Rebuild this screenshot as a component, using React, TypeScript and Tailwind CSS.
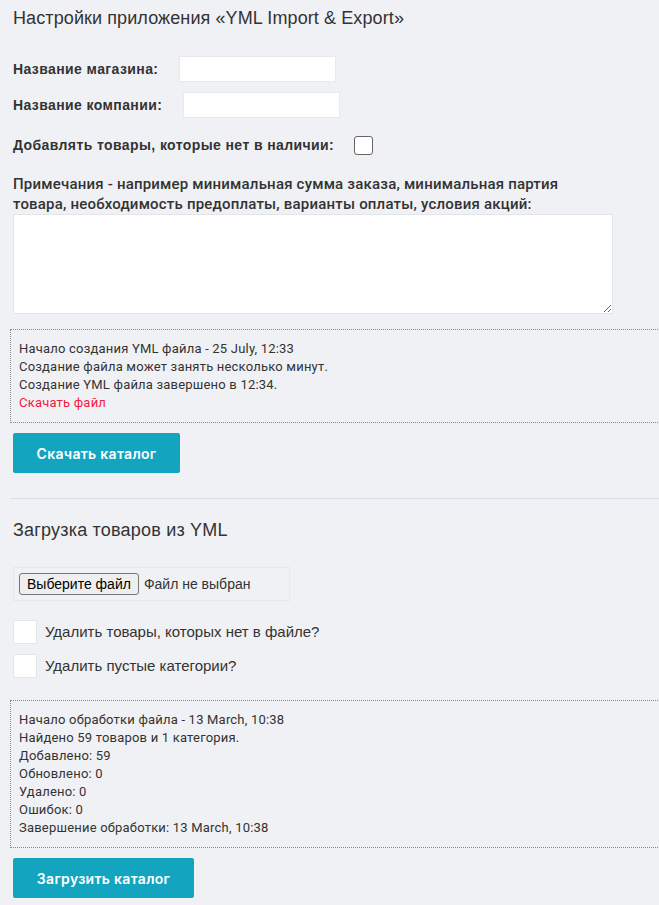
import { useState } from "react";

const logLines = [
  "Начало обработки файла - 13 March, 10:38",
  "Найдено 59 товаров и 1 категория.",
  "Добавлено: 59",
  "Обновлено: 0",
  "Удалено: 0",
  "Ошибок: 0",
  "Завершение обработки: 13 March, 10:38",
];

function LogBox({ children }: { children: React.ReactNode }) {
  return (
    <div className="-ml-[3px] w-[700px] border border-dotted border-[#8a8a8a] px-[8px] py-[10px] text-[13px] leading-[18px] tracking-[0.2px] text-[#333] font-['Roboto',sans-serif]">
      {children}
    </div>
  );
}

function Checkbox({ checked, onChange, className }: { checked: boolean; onChange: () => void; className: string }) {
  return (
    <button
      type="button"
      onClick={onChange}
      className={className + " bg-white grid place-items-center shrink-0"}
    >
      {checked && (
        <svg viewBox="0 0 16 16" className="w-3 h-3 text-[#333]">
          <path d="M3 8l3 3 7-7" fill="none" stroke="currentColor" strokeWidth="2" />
        </svg>
      )}
    </button>
  );
}

export default function App() {
  const [outOfStock, setOutOfStock] = useState(false);
  const [delMissing, setDelMissing] = useState(false);
  const [delEmpty, setDelEmpty] = useState(false);

  return (
    <div className="min-h-[905px] bg-[#f0f1f4] overflow-hidden pl-[13px] text-[#333] font-['Liberation_Sans',Arial,sans-serif]">
      <h1 className="pt-[6px] text-[18px] leading-[24px] tracking-[0.1px]">Настройки приложения «YML Import &amp; Export»</h1>

      {/* настройки */}
      <div className="mt-[26px] flex items-center gap-[21px]">
        <label className="text-[14px] font-bold tracking-[0.4px]">Название магазина:</label>
        <input className="w-[157px] h-[26px] bg-white border border-[#e7e9ec] outline-none px-2 text-[13px]" />
      </div>
      <div className="mt-[10px] flex items-center gap-[21px]">
        <label className="text-[14px] font-bold tracking-[0.4px]">Название компании:</label>
        <input className="w-[157px] h-[26px] bg-white border border-[#e7e9ec] outline-none px-2 text-[13px]" />
      </div>
      <div className="mt-[17px] flex items-center gap-[20px]">
        <label className="text-[14px] font-bold tracking-[0.4px]">Добавлять товары, которые нет в наличии:</label>
        <Checkbox
          checked={outOfStock}
          onChange={() => setOutOfStock(!outOfStock)}
          className="w-[19px] h-[19px] rounded-[3px] border border-[#666]"
        />
      </div>

      <p className="mt-[18px] text-[15px] leading-[20px] font-medium font-['Roboto',sans-serif] tracking-[0.2px]">
        Примечания - например минимальная сумма заказа, минимальная партия
        <br />
        товара, необходимость предоплаты, варианты оплаты, условия акций:
      </p>
      <textarea className="block w-[600px] h-[100px] bg-white border border-[#e2e5e9] outline-none p-2 text-[13px]" />

      <div className="mt-[15px]">
        <LogBox>
          <div>Начало создания YML файла - 25 July, 12:33</div>
          <div>Создание файла может занять несколько минут.</div>
          <div>Создание YML файла завершено в 12:34.</div>
          <a href="#" className="text-[#f5193c]">Скачать файл</a>
        </LogBox>
      </div>

      <button className="mt-[10px] w-[167px] h-[40px] rounded-[2px] bg-[#13a5bf] text-white text-[14px] font-semibold tracking-[0.3px] font-['Inter',sans-serif]">
        Скачать каталог
      </button>

      <div className="mt-[25px] -ml-[3px] w-[700px] border-t border-[#dcdfe5]" />

      <h2 className="mt-[19px] text-[18px] leading-[24px] tracking-[0.2px]">Загрузка товаров из YML</h2>

      {/* файл */}
      <div className="mt-[25px] w-[277px] h-[34px] border border-[#e6e8eb] flex items-center pl-[5px] text-[14px] font-['Liberation_Sans',Arial,sans-serif]">
        <label className="h-[22px] px-[7px] flex items-center border border-[#767676] rounded-[3px] bg-[#efefef] text-black cursor-pointer">
          Выберите файл
          <input type="file" className="hidden" />
        </label>
        <span className="ml-[5px] text-[#333]">Файл не выбран</span>
      </div>

      <div className="mt-[19px] flex items-center gap-[8px]">
        <Checkbox
          checked={delMissing}
          onChange={() => setDelMissing(!delMissing)}
          className="w-[24px] h-[24px] rounded-[2px] border border-[#e3e5e8]"
        />
        <span className="text-[15px]">Удалить товары, которых нет в файле?</span>
      </div>
      <div className="mt-[10px] flex items-center gap-[8px]">
        <Checkbox
          checked={delEmpty}
          onChange={() => setDelEmpty(!delEmpty)}
          className="w-[24px] h-[24px] rounded-[2px] border border-[#e3e5e8]"
        />
        <span className="text-[15px]">Удалить пустые категории?</span>
      </div>

      <div className="mt-[22px]">
        <LogBox>
          {logLines.map((l) => (
            <div key={l}>{l}</div>
          ))}
        </LogBox>
      </div>

      <button className="mt-[10px] w-[181px] h-[40px] rounded-[2px] bg-[#13a5bf] text-white text-[14px] font-semibold tracking-[0.3px] font-['Inter',sans-serif]">
        Загрузить каталог
      </button>
    </div>
  );
}
